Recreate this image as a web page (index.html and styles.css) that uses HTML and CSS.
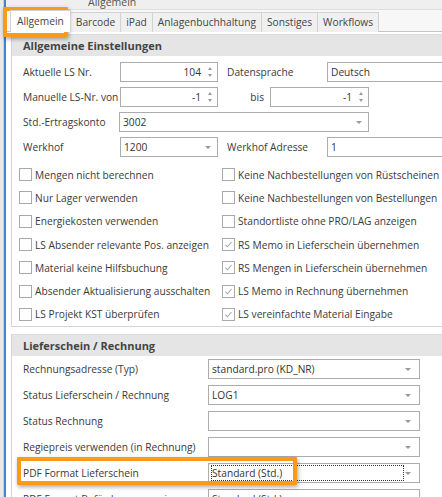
FILE: index.html
```html
<!DOCTYPE html>
<html lang="de">
<head>
<meta charset="utf-8">
<title>Allgemein</title>
<link rel="stylesheet" href="styles.css">
</head>
<body>
<div class="app">
  <div class="rail"></div>
  <div class="main">
    <div class="caption"><span>Allgemein</span></div>
    <div class="tabbar">
      <div class="tab active">Allgemein</div>
      <div class="tab">Barcode</div>
      <div class="tab">iPad</div>
      <div class="tab">Anlagenbuchhaltung</div>
      <div class="tab">Sonstiges</div>
      <div class="tab">Workflows</div>
    </div>
    <div class="page">
      <section class="group">
        <div class="ghead">Allgemeine Einstellungen</div>
        <div class="gbody">
          <div class="frow">
            <span class="lbl lw">Aktuelle LS Nr.</span>
            <div class="inp num iw"><span>104</span><i class="spn"></i></div>
            <span class="lbl rw">Datensprache</span>
            <div class="inp combo cw">Deutsch<i class="arr"></i></div>
          </div>
          <div class="frow">
            <span class="lbl lw">Manuelle LS-Nr. von</span>
            <div class="inp num iw"><span>-1</span><i class="spn"></i></div>
            <span class="lbl bis">bis</span>
            <div class="inp num iw2"><span>-1</span><i class="spn"></i></div>
          </div>
          <div class="frow">
            <span class="lbl lw">Std.-Ertragskonto</span>
            <div class="inp combo wide">3002<i class="arr"></i></div>
          </div>
          <div class="frow">
            <span class="lbl lw">Werkhof</span>
            <div class="inp combo iw">1200<i class="arr"></i></div>
            <span class="lbl rw">Werkhof Adresse</span>
            <div class="inp combo cw">1<i class="arr"></i></div>
          </div>
        </div>
        <div class="checks">
          <div class="chk"><i class="box"></i>Mengen nicht berechnen</div>
          <div class="chk"><i class="box"></i>Keine Nachbestellungen von Rüstscheinen</div>
          <div class="chk"><i class="box"></i>Nur Lager verwenden</div>
          <div class="chk"><i class="box"></i>Keine Nachbestellungen von Bestellungen</div>
          <div class="chk"><i class="box"></i>Energiekosten verwenden</div>
          <div class="chk"><i class="box"></i>Standortliste ohne PRO/LAG anzeigen</div>
          <div class="chk"><i class="box"></i>LS Absender relevante Pos. anzeigen</div>
          <div class="chk"><i class="box"><svg viewBox="0 0 11 11" width="11" height="11"><polyline points="2.5,5.8 4.5,7.8 8.5,3" fill="none" stroke="#a6a6a6" stroke-width="1.1"/></svg></i>RS Memo in Lieferschein übernehmen</div>
          <div class="chk"><i class="box"></i>Material keine Hilfsbuchung</div>
          <div class="chk"><i class="box"><svg viewBox="0 0 11 11" width="11" height="11"><polyline points="2.5,5.8 4.5,7.8 8.5,3" fill="none" stroke="#a6a6a6" stroke-width="1.1"/></svg></i>RS Mengen in Lieferschein übernehmen</div>
          <div class="chk"><i class="box"></i>Absender Aktualisierung ausschalten</div>
          <div class="chk"><i class="box"><svg viewBox="0 0 11 11" width="11" height="11"><polyline points="2.5,5.8 4.5,7.8 8.5,3" fill="none" stroke="#a6a6a6" stroke-width="1.1"/></svg></i>LS Memo in Rechnung übernehmen</div>
          <div class="chk"><i class="box"></i>LS Projekt KST überprüfen</div>
          <div class="chk"><i class="box"><svg viewBox="0 0 11 11" width="11" height="11"><polyline points="2.5,5.8 4.5,7.8 8.5,3" fill="none" stroke="#a6a6a6" stroke-width="1.1"/></svg></i>LS vereinfachte Material Eingabe</div>
        </div>
      </section>
      <section class="group g2">
        <div class="ghead">Lieferschein / Rechnung</div>
        <div class="gbody2">
          <div class="frow2"><span class="lbl lw2">Rechnungsadresse (Typ)</span><div class="inp combo c2">standard.pro (KD_NR)<i class="arr"></i></div></div>
          <div class="frow2"><span class="lbl lw2">Status Lieferschein / Rechnung</span><div class="inp combo c2">LOG1<i class="arr"></i></div></div>
          <div class="frow2"><span class="lbl lw2">Status Rechnung</span><div class="inp combo c2"><i class="arr"></i></div></div>
          <div class="frow2"><span class="lbl lw2">Regiepreis verwenden (in Rechnung)</span><div class="inp combo c2"><i class="arr"></i></div></div>
          <div class="frow2"><span class="lbl lw2">PDF Format Lieferschein</span><div class="inp combo c2 focus"><span class="focusbox">Standard (Std.)</span><i class="arr"></i></div></div>
          <div class="frow2"><span class="lbl lw2">PDF Format Beförderungspapier</span><div class="inp combo c2">Standard (Std.)<i class="arr"></i></div></div>
        </div>
      </section>
    </div>
  </div>
  <div class="hl hl-tab"></div>
  <div class="hl hl-row"></div>
</div>
</body>
</html>
```

FILE: styles.css
```css
* { box-sizing: border-box; }
html, body { margin: 0; padding: 0; }
body {
  width: 442px;
  height: 497px;
  overflow: hidden;
  background: #ffffff;
  font-family: "Open Sans", "Noto Sans", sans-serif;
  font-size: 10.2px;
  color: #3a3a3a;
}
.app {
  position: relative;
  display: flex;
  width: 442px;
  height: 497px;
  overflow: hidden;
}
.rail {
  flex: 0 0 6px;
  background: #e9e9e9;
  border-left: 3px solid #e9e9e9;
  border-right: 2px solid #3d86d6;
  box-shadow: inset 1px 0 0 #cfcfcf;
}
.main {
  flex: 1 1 auto;
  min-width: 0;
  display: flex;
  flex-direction: column;
}
.main > * { flex-shrink: 0; }
.caption {
  height: 9px;
  background: #efefef;
  overflow: hidden;
  padding-left: 82px;
}
.caption span {
  display: block;
  line-height: 12px;
  margin-top: -4px;
  font-size: 10.5px;
  color: #555;
}
.tabbar {
  display: flex;
  align-items: flex-end;
  height: 23px;
  background: #f7f7f7;
  border-top: 1px solid #dedede;
  border-bottom: 1px solid #c4c4c4;
  padding-left: 4px;
}
.tab {
  height: 20px;
  line-height: 18px;
  padding: 0 5px;
  background: #f0f0f0;
  border: 1px solid #d2d2d2;
  border-bottom: none;
  margin-right: -1px;
  color: #444;
  margin-bottom: -1px;
  font-size: 10.2px;
}
.tab.active {
  background: #ffffff;
  height: 22px;
  line-height: 20px;
  padding: 0 6px;
  position: relative;
  z-index: 1;
}
.page {
  padding: 2px 0 0 5px;
}
.group {
  border-left: 1px solid #d4d4d4;
  border-bottom: 1px solid #d4d4d4;
}
.g2 {
  margin-top: 7px;
  border-bottom: none;
}
.ghead {
  height: 22px;
  line-height: 21px;
  background: #e5e5e5;
  border-top: 1px solid #dcdcdc;
  padding-left: 11px;
  font-weight: 700;
  font-size: 11px;
  color: #444;
}
.gbody {
  padding: 6px 0 0 11px;
  display: flex;
  flex-direction: column;
  gap: 5px;
}
.frow {
  display: flex;
  align-items: center;
  height: 20px;
}
.lbl {
  white-space: nowrap;
  overflow: hidden;
}
.lw { width: 97px; flex: 0 0 97px; }
.rw { width: 100px; flex: 0 0 100px; margin-left: 9px; }
.bis { width: 52px; flex: 0 0 52px; text-align: right; padding-right: 6px; }
.inp {
  position: relative;
  height: 20px;
  line-height: 18px;
  border: 1px solid #acacac;
  background: #fff;
  padding: 0 3px;
  white-space: nowrap;
  color: #333;
}
.iw { width: 98px; flex: 0 0 98px; }
.iw2 { width: 99px; flex: 0 0 99px; }
.cw { width: 130px; flex: 0 0 130px; }
.wide { width: 250px; flex: 0 0 250px; margin-left: -1px; }
.num { text-align: right; padding-right: 16px; }
.spn {
  position: absolute;
  right: 4px;
  top: 4px;
  width: 5px;
  height: 10px;
}
.spn::before, .spn::after {
  content: "";
  position: absolute;
  left: 0;
  border-left: 2.5px solid transparent;
  border-right: 2.5px solid transparent;
}
.spn::before { top: 0; border-bottom: 3px solid #9a9a9a; }
.spn::after { bottom: 0; border-top: 3px solid #9a9a9a; }
.arr {
  position: absolute;
  right: 6px;
  top: 8px;
  width: 0;
  height: 0;
  border-left: 3px solid transparent;
  border-right: 3px solid transparent;
  border-top: 3px solid #9a9a9a;
}
.checks {
  display: grid;
  grid-template-columns: 203px 1fr;
  grid-auto-rows: 23.3px;
  padding: 6px 0 0 7px;
}
.chk {
  display: flex;
  align-items: center;
  white-space: nowrap;
  color: #3a3a3a;
}
.box {
  width: 13px;
  height: 13px;
  flex: 0 0 13px;
  border: 1px solid #a9a9a9;
  background: #fff;
  margin-right: 3px;
  display: flex;
  align-items: center;
  justify-content: center;
}
.box svg { display: block; }
.gbody2 {
  padding: 3px 0 0 11px;
  display: flex;
  flex-direction: column;
  gap: 6px;
}
.frow2 {
  display: flex;
  align-items: center;
  height: 20px;
}
.lw2 { width: 185px; flex: 0 0 185px; }
.c2 { width: 212px; flex: 0 0 212px; }
.c2 .arr { right: 8px; }
.focus { padding: 1px 0 0 2px; }
.focusbox {
  display: block;
  width: 193px;
  height: 16px;
  line-height: 14px;
  border: 1px dotted #333;
}
.hl {
  position: absolute;
  border: 4px solid #f89a1c;
  border-radius: 1px;
  box-shadow: 1px 2px 4px rgba(0, 0, 0, 0.35);
  pointer-events: none;
}
.hl-tab { left: 3px; top: 7px; width: 65px; height: 30px; }
.hl-row { left: 17px; top: 457px; width: 280px; height: 28px; }
```
